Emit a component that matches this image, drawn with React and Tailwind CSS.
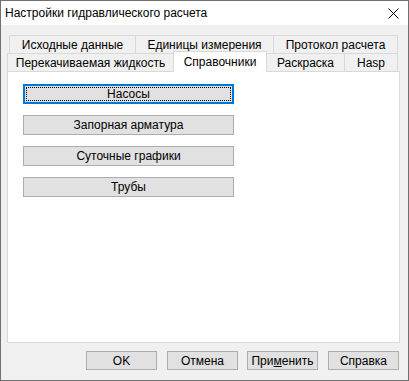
import React from "react";

function Btn({ children, className = "" }) {
  return (
    <div
      className={
        "flex items-center justify-center bg-[#e1e1e1] border border-[#adadad] text-black " +
        className
      }
    >
      {children}
    </div>
  );
}

export default function App() {
  return (
    <div className="w-[409px] h-[381px] border border-[#707070] bg-[#f0f0f0] flex flex-col font-['Liberation_Sans',Arial,sans-serif] text-[12px] text-black leading-none">
      {/* title bar */}
      <div className="h-[24px] bg-white flex items-center justify-between pl-[4px] pr-[9px] shrink-0">
        <span className="text-[12px]">Настройки гидравлического расчета</span>
        <svg width="11" height="11" viewBox="0 0 11 11">
          <path d="M0.5 0.5 L10.5 10.5 M10.5 0.5 L0.5 10.5" stroke="#000" strokeWidth="1" fill="none" />
        </svg>
      </div>

      {/* body */}
      <div className="flex flex-col pt-[10px] pl-[6px]">
        {/* tab row 1 */}
        <div className="flex h-[18px] ml-[2px]">
          <div className="w-[126px] h-full border-t border-l border-[#d9d9d9] flex items-center justify-center pt-[1px]">
            Исходные данные
          </div>
          <div className="w-[138px] h-full border-t border-l border-[#d9d9d9] flex items-center justify-center pt-[1px]">
            Единицы измерения
          </div>
          <div className="w-[125px] h-full border-t border-l border-r border-[#d9d9d9] flex items-center justify-center pt-[1px]">
            Протокол расчета
          </div>
        </div>
        {/* tab row 2 */}
        <div className="flex items-end h-[18px] relative z-10">
          <div className="w-[166px] h-[18px] border-t border-l border-[#d9d9d9] border-t-[#d9d9d9] flex items-center justify-center pt-[1px]">
            Перекачиваемая жидкость
          </div>
          <div className="w-[94px] h-[21px] -mb-[1px] bg-white border-t border-l border-r border-[#d9d9d9] flex items-start justify-center pt-[4px]">
            Справочники
          </div>
          <div className="w-[77px] h-[18px] border-t border-[#d9d9d9] flex items-center justify-center pt-[1px]">
            Раскраска
          </div>
          <div className="w-[54px] h-[18px] border-t border-l border-r border-[#d9d9d9] flex items-center justify-center pt-[1px]">
            Hasp
          </div>
        </div>
        {/* panel */}
        <div className="w-[393px] h-[272px] bg-white border border-[#d9d9d9] flex flex-col pt-[12px] pl-[15px] gap-[11px]">
          <div className="w-[211px] h-[20px] border-2 border-[#0078d7] bg-[#e1e1e1] p-[1px]">
            <div className="w-full h-full border border-dotted border-black flex items-center justify-center">
              Насосы
            </div>
          </div>
          <Btn className="w-[211px] h-[20px]">Запорная арматура</Btn>
          <Btn className="w-[211px] h-[20px]">Суточные графики</Btn>
          <Btn className="w-[211px] h-[20px]">Трубы</Btn>
        </div>
        {/* bottom buttons */}
        <div className="flex mt-[8px] ml-[79px]">
          <Btn className="w-[71px] h-[19px]">OK</Btn>
          <Btn className="w-[71px] h-[19px] ml-[10px]">Отмена</Btn>
          <Btn className="w-[71px] h-[19px] ml-[9px]">
            <span>
              При<span className="underline">м</span>енить
            </span>
          </Btn>
          <Btn className="w-[71px] h-[19px] ml-[10px]">Справка</Btn>
        </div>
      </div>
    </div>
  );
}
